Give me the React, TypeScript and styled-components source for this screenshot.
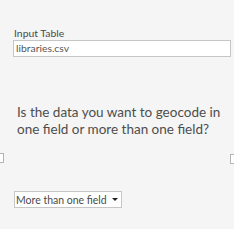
import * as React from "react"
import styled, { createGlobalStyle } from "styled-components"

const GlobalStyle = createGlobalStyle`
  body {
    margin: 0;
    background: #ffffff;
    font-family: Lato, "Noto Sans", sans-serif;
  }
`

const Panel = styled.div`
  width: 234px;
  height: 229px;
  background-color: #f5f5f5;
  box-sizing: border-box;
  padding: 27px 3px 0 13px;
  display: flex;
  flex-direction: column;
`

const FieldLabel = styled.div`
  font-size: 10.4px;
  line-height: 12px;
  color: #4a4a4a;
  padding-left: 1px;
`

const TextBox = styled.div`
  margin-top: 1px;
  height: 17px;
  box-sizing: border-box;
  background: #ffffff;
  border: 1px solid #c6c6c6;
  font-size: 10.4px;
  line-height: 15px;
  color: #555555;
  padding-left: 2px;
`

const Question = styled.div`
  margin-top: 47px;
  padding-left: 4px;
  font-size: 13.5px;
  line-height: 17px;
  color: #4d4d4d;
`

const StubRow = styled.div`
  margin: 15px -3px 0 -13px;
  display: flex;
  justify-content: space-between;
`

const Stub = styled.div<{ $side: "left" | "right" }>`
  width: 3px;
  height: 8px;
  border: 1px solid #b4b4b4;
  border-${(p) => (p.$side === "left" ? "left" : "right")}: none;
  margin-top: ${(p) => (p.$side === "left" ? "0" : "1px")};
  background: #ffffff;
`

const Select = styled.div`
  margin-top: 27px;
  margin-left: 1px;
  width: 108px;
  height: 17px;
  box-sizing: border-box;
  background: #ffffff;
  border: 1px solid #c6c6c6;
  display: flex;
  align-items: center;
  justify-content: space-between;
  padding: 0 3px 0 1px;
  font-size: 10.5px;
  white-space: nowrap;
  color: #4a4a4a;
`

const Caret = styled.span`
  width: 0;
  height: 0;
  border-left: 3px solid transparent;
  border-right: 3px solid transparent;
  border-top: 3px solid #222222;
`

export default function App() {
  return (
    <>
      <GlobalStyle />
      <Panel>
        <FieldLabel>Input Table</FieldLabel>
        <TextBox>libraries.csv</TextBox>
        <Question>
          Is the data you want to geocode in one field or more than one field?
        </Question>
        <StubRow>
          <Stub $side="left" />
          <Stub $side="right" />
        </StubRow>
        <Select>
          <span>More than one field</span>
          <Caret />
        </Select>
      </Panel>
    </>
  )
}
